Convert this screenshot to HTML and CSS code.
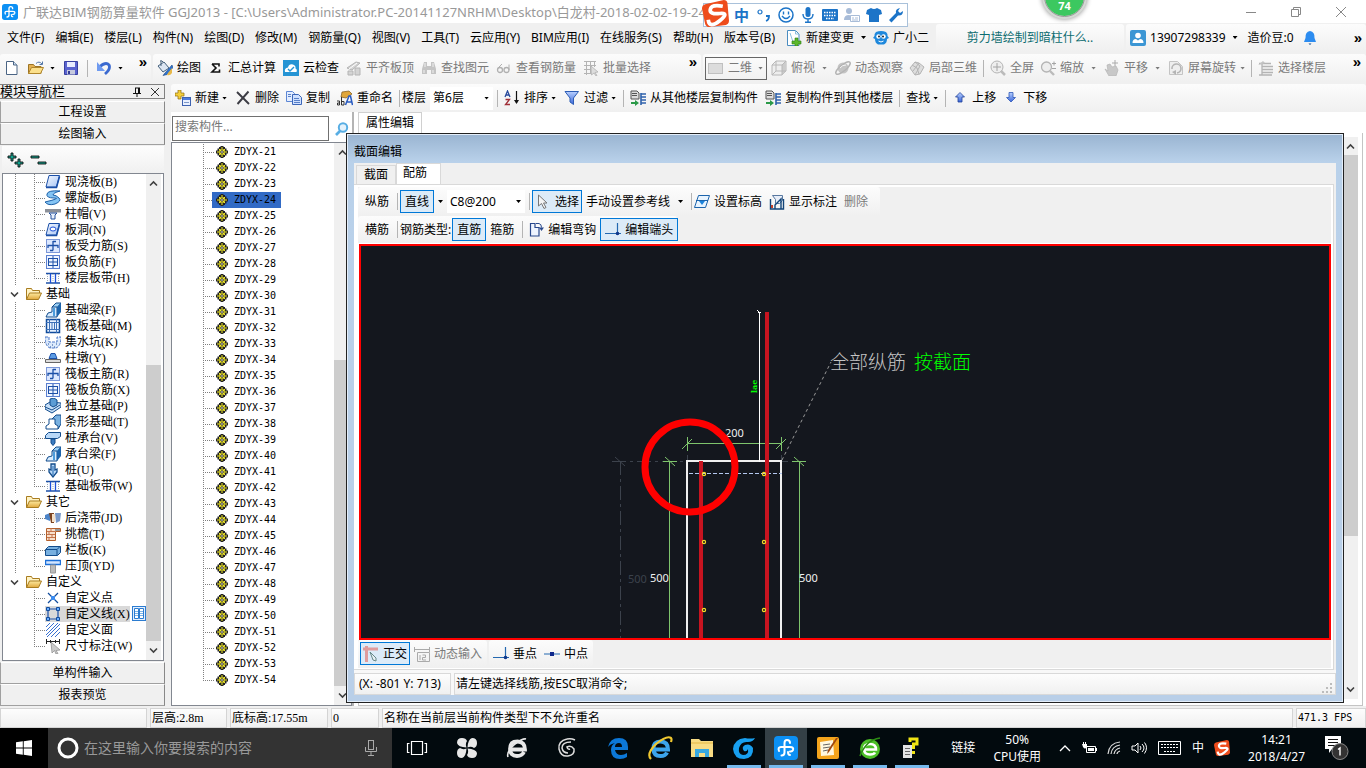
FILE: index.html
```html
<!DOCTYPE html>
<html lang="zh-CN">
<head>
<meta charset="utf-8">
<title>广联达BIM钢筋算量软件 GGJ2013</title>
<link rel="stylesheet" href="styles.css">
</head>
<body>
<svg class="sprite" aria-hidden="true">
  <defs>
    <linearGradient id="gBlue" x1="0" y1="0" x2="0" y2="1"><stop offset="0" stop-color="#b8d0ff"/><stop offset="1" stop-color="#3a66d8"/></linearGradient>
    <linearGradient id="gGold" x1="0" y1="0" x2="0" y2="1"><stop offset="0" stop-color="#fdeaa0"/><stop offset="1" stop-color="#e0a83c"/></linearGradient>
    <linearGradient id="gPlate" x1="0" y1="0" x2="1" y2="1"><stop offset="0" stop-color="#f4f8ff"/><stop offset="1" stop-color="#a9c6f5"/></linearGradient>
  </defs>
  <symbol id="app" viewBox="0 0 24 24"><rect width="24" height="24" rx="4" fill="#0c90f4"/><path d="M16 7q0-3-3-3-2.500 0-2.500 3v9.500q0 3-3 3M5 15q-1.500-4 2-4h9q4 0 3 3-1 2-3 1.500M14 16q0 3 2 3" fill="none" stroke="#fff" stroke-width="2" stroke-linecap="round"/></symbol>
  <symbol id="new" viewBox="0 0 16 16"><path d="M2.500 1.500h7l3.500 3.500v9.500H2.500z" fill="#fff" stroke="#4a6484"/><path d="M9.500 1.500v3.500H13" fill="#cfe0f4" stroke="#4a6484"/></symbol>
  <symbol id="open" viewBox="0 0 16 16"><path d="M.5 13.500v-9h5l1.500 2h6v7z" fill="#e3b052" stroke="#9c7424"/><path d="M.5 13.500l3-6h12l-3 6z" fill="#fbe08c" stroke="#b0862c"/><path d="M8 3.500q3-3 6 .5M14.500 1.500v3h-3" fill="none" stroke="#5478a8"/></symbol>
  <symbol id="save" viewBox="0 0 16 16"><path d="M1.500 1.500h13v13h-13z" fill="#5a63cf" stroke="#3840a0"/><path d="M4 2h8v5H4z" fill="#e8ecff"/><path d="M4 10h8v4.500H4z" fill="#c6cade"/><path d="M5 11h2v3H5z" fill="#343c94"/></symbol>
  <symbol id="undo" viewBox="0 0 16 16"><path d="M4 6.500q6-5 9-1.500 2 4-4 9" fill="none" stroke="#3b6ad0" stroke-width="2.800"/><path d="M1 2v9h8z" fill="#6f9bf0"/></symbol>
  <symbol id="paint" viewBox="0 0 16 16"><path d="M1 6l6-4 5 6-6 4z" fill="#dce6f2" stroke="#44607c"/><path d="M4 1v5M3 1q2-1 3 1" stroke="#44607c" fill="none"/><path d="M15 5l-7 8-2 2.500 4-1 6-7z" fill="#2f74d0" stroke="#1a4684" stroke-width=".6"/><path d="M11 13l4-5v5q-2 3-5 2z" fill="#e8b848"/></symbol>
  <symbol id="sigma" viewBox="0 0 16 16"><path d="M4 4h7v2.500M4 4l4 4-4 4h7.500V9.500" fill="none" stroke="#111" stroke-width="1.600"/></symbol>
  <symbol id="cloud" viewBox="0 0 16 16"><rect width="16" height="16" fill="#2594d4"/><path d="M2 12q-1-4 3-4.500 1-4 5-3 3 1 2.500 4 2 1 1 3.500z" fill="#fff"/><path d="M5 9l2 2 4-4" fill="none" stroke="#2594d4" stroke-width="1.400"/></symbol>
  <symbol id="align" viewBox="0 0 16 16"><path d="M1 8l9-6 4 1-8 7zM2 11h5v4H2zM9 8h5v7H9z" fill="#d4d4d4" stroke="#b4b4b4"/><path d="M3 9l8-6" stroke="#fff"/></symbol>
  <symbol id="find" viewBox="0 0 16 16"><path d="M3 2h3v4h4V2h3l2 7v5H10v-4H6v4H1V9z" fill="#c4c4c4"/><path d="M3 10v3M12 10v3M4 3v4M12 3v4" stroke="#f0f0f0"/></symbol>
  <symbol id="glasses" viewBox="0 0 16 16"><circle cx="4" cy="10" r="2.500" fill="none" stroke="#b0b0b0" stroke-width="1.300"/><circle cx="10.500" cy="10" r="2.500" fill="none" stroke="#b0b0b0" stroke-width="1.300"/><path d="M2 8l4-4M13 10V4.500" stroke="#b0b0b0" fill="none"/></symbol>
  <symbol id="batch" viewBox="0 0 16 16"><path d="M1 1.500h12M1 5.500h12M1 9.500h7M1 13.500h6M3.500 1v14M7.500 1v13M11.500 1v6" stroke="#b4b4b4" fill="none"/><path d="M8 6l7 6-3 .5 2 3-1 .5-2-3-2.500 2z" fill="#ddd" stroke="#aaa" stroke-width=".7"/></symbol>
  <symbol id="flat" viewBox="0 0 16 16"><rect x=".5" y="3.500" width="14" height="10" fill="#dcdcdc" stroke="#c0c0c0"/></symbol>
  <symbol id="cube" viewBox="0 0 16 16"><path d="M1 5l4-4h10v10l-4 4H1z" fill="#eee" stroke="#b8b8b8"/><path d="M11 5l4-4v10l-4 4z" fill="#ccc"/><path d="M1 5h10v10M11 5l4-4M5 1v10H15M5 11l-4 4" fill="none" stroke="#b8b8b8"/></symbol>
  <symbol id="orbit" viewBox="0 0 16 16"><circle cx="8" cy="8" r="5.500" fill="#c4c4c4"/><ellipse cx="8" cy="8" rx="9" ry="3" transform="rotate(-40 8 8)" fill="none" stroke="#b4b4b4" stroke-width="1.400"/><path d="M5 8q2-3 6-3" stroke="#f4f4f4" fill="none"/></symbol>
  <symbol id="local" viewBox="0 0 16 16"><path d="M1 8l5-6 4 1 5 4-4 7-5 1z" fill="#ddd" stroke="#b4b4b4"/><path d="M3 5l5 3 2 6M6 2l5 4-5 9M10 3L4 11" fill="none" stroke="#b4b4b4"/></symbol>
  <symbol id="full" viewBox="0 0 16 16"><circle cx="7" cy="7" r="6" fill="#eee" stroke="#b4b4b4"/><path d="M7 3v8M3 7h8" stroke="#a4a4a4"/><path d="M11 11l4 4" stroke="#bbb" stroke-width="2.500"/></symbol>
  <symbol id="zoom" viewBox="0 0 16 16"><circle cx="6.500" cy="7" r="5" fill="#eee" stroke="#b4b4b4" stroke-width="1.300"/><path d="M10 11l4 4" stroke="#bbb" stroke-width="2.400"/><path d="M12 3.500h4M14 1.500v4M12 8.500h4" stroke="#a4a4a4"/></symbol>
  <symbol id="hand" viewBox="0 0 16 16"><path d="M1 9l3 2-1-6 3-1 2 3 4-1 2 4-2 6H5z" fill="#c8c8c8" stroke="#b4b4b4" stroke-width=".7"/><path d="M11 0v6M8 3h6" stroke="#aaa"/></symbol>
  <symbol id="rotate" viewBox="0 0 16 16"><path d="M1.500 14.500v-13h8l5 5v8z" fill="#eee" stroke="#c4c4c4"/><path d="M4 9a4.500 4.500 0 1 1 5 4" fill="none" stroke="#b4b4b4" stroke-width="1.600"/><path d="M4 12l4-2v5z" fill="#b4b4b4"/></symbol>
  <symbol id="floors" viewBox="0 0 16 16"><path d="M1 3.500h12M4 6.500h11M4 9.500h11M4 12.500h11M1 15h13M4 3v12" stroke="#b4b4b4" fill="none" stroke-width="1.300"/><path d="M0 5l5-4 2 2z" fill="#c4c4c4"/></symbol>
  <symbol id="add" viewBox="0 0 16 16"><path d="M3 0h3v3h3v3H6v3H3V6H0V3h3z" fill="#f4cf3c" stroke="#8c6c10" stroke-width=".7"/><rect x="7.500" y="7.500" width="8" height="8" fill="#e9f0ff" stroke="#3e62b0"/><path d="M8 8h7v2H8z" fill="#4d7ce0"/><path d="M9 12.500h5" stroke="#7d98c8"/></symbol>
  <symbol id="del" viewBox="0 0 16 16"><path d="M2 2l12 12M13.500 1.500L2.500 14" stroke="#3c3c44" stroke-width="1.900"/></symbol>
  <symbol id="copy" viewBox="0 0 16 16"><path d="M.5 1.500h6l2 2v8h-8z" fill="#e3edff" stroke="#5c86d4"/><path d="M6.500 4.500h6l3 3v7h-9z" fill="#cfe0ff" stroke="#3c66b8"/><path d="M2 4.500h3M2 6.500h3M8 8.500h5M8 10.500h6M8 12.500h6" stroke="#5880c8"/></symbol>
  <symbol id="rename" viewBox="0 0 16 16"><path d="M5 2l7-1 3 3-6 4-5-1z" fill="#e0a63a" stroke="#7c5618" stroke-width=".7"/><path d="M8.500 15L12 6h1.500l2 9M10 12h4.500" stroke="#285ac0" stroke-width="1.500" fill="none"/><path d="M0 11h2.500v4H.5v-2h2M4.500 7v8h2.500v-3.500H5" stroke="#333" fill="none"/></symbol>
  <symbol id="sort" viewBox="0 0 16 16"><path d="M1 7l2.500-6L6 7M2 5h3" stroke="#284a9c" stroke-width="1.300" fill="none"/><path d="M1.500 9.500h4l-4 5h4.500" stroke="#a03038" stroke-width="1.300" fill="none"/><path d="M12.500 1v12" stroke="#111" stroke-width="1.200"/><path d="M10 10h5l-2.500 4z" fill="#111"/></symbol>
  <symbol id="filter" viewBox="0 0 16 16"><path d="M1 1.500h13.500L9.500 8v6.500L6 12V8z" fill="url(#gBlue)" stroke="#2c5cb4"/></symbol>
  <symbol id="fromf" viewBox="0 0 16 16"><path d="M1 1h6l2 2v6H1z" fill="#ddd" stroke="#555"/><path d="M2 3.500h5M2 5.500h5" stroke="#555"/><path d="M1 12h4v-2l4 3-4 3v-2H1z" fill="#2b9a48"/><path d="M11 3v12M11 4h5M11 7h5M11 10h5M11 13h5" stroke="#2f62ac" stroke-width="1.600"/></symbol>
  <symbol id="up" viewBox="0 0 16 16"><path d="M8 2.500l4.500 4.500H10v5H6V7H3.500z" fill="url(#gBlue)" stroke="#1e4098" stroke-width=".8"/></symbol>
  <symbol id="down" viewBox="0 0 16 16"><path d="M8 12l4.500-4.500H10v-5H6v5H3.500z" fill="url(#gBlue)" stroke="#2e58b8" stroke-width=".8"/></symbol>
  <symbol id="change" viewBox="0 0 16 16"><path d="M1.500.5h8l3.500 3.500v11.500H1.500z" fill="#fff" stroke="#4a8cc0"/><path d="M9.500.5V4H13M4 3l3 9" stroke="#8cc0e0" fill="none"/><path d="M9 8h3v3h3v3h-3v2H9v-2H6v-3h3z" fill="#5cb82c" stroke="#2c7c14" stroke-width=".6"/></symbol>
  <symbol id="owl" viewBox="0 0 16 16"><path d="M3 2q5-2 10 0 2 2 1.500 4l1.500 2-2 1q0 4-3 5.500H5Q2 13 2 9L0 8l1.500-2Q1 4 3 2z" fill="#1e88dc"/><circle cx="5.500" cy="6.500" r="2.200" fill="#fff"/><circle cx="10.500" cy="6.500" r="2.200" fill="#fff"/><circle cx="6" cy="6.500" r="1" fill="#123"/><circle cx="10" cy="6.500" r="1" fill="#123"/><path d="M5.500 11q2.500 2 5 0" stroke="#fff" fill="none"/></symbol>
  <symbol id="user" viewBox="0 0 16 16"><rect width="16" height="16" rx="2" fill="#3c96d4"/><circle cx="8" cy="5.500" r="2.800" fill="#fff"/><path d="M2.500 13q0-4 3.500-4l2 1.500L10 9q3.500 0 3.500 4z" fill="#fff"/></symbol>
  <symbol id="bell" viewBox="0 0 16 16"><path d="M8 1q5 1 4.500 7l1.500 4H2l1.500-4Q3 2 8 1z" fill="#2c8cf0"/><path d="M6.500 13.500h3L8 15z" fill="#124c90"/></symbol>
  <symbol id="folder" viewBox="0 0 16 16"><path d="M.5 13.500v-11h5l1 2h7v3" fill="#fff3c4" stroke="#a87c20"/><path d="M.5 13.500l3-6.500h12l-3 6.500z" fill="url(#gGold)" stroke="#a87c20"/></symbol>
  <symbol id="chev" viewBox="0 0 9 9"><path d="M1 2.500l3.500 3.500L8 2.500" fill="none" stroke="#404040" stroke-width="1.600"/></symbol>
  <symbol id="slab" viewBox="0 0 16 16"><path d="M4 1.500h10.500l-3 11.500H1z" fill="url(#gPlate)" stroke="#1c50a8"/><path d="M1 13.500h10.500l3-11" stroke="#1c50a8" stroke-width="1.600" fill="none"/></symbol>
  <symbol id="spiral" viewBox="0 0 16 16"><path d="M15 1Q3 0 2 4t7 4-9 4q3 4 10 2 7-3 4-6T8 5q0-2 7-4z" fill="#84c4f4" stroke="#1c60a8"/></symbol>
  <symbol id="cap" viewBox="0 0 16 16"><path d="M0 3h16v3.500H0z" fill="#8c9098"/><path d="M4 7h8l-2 2v4H6V9z" fill="#e8f0fc" stroke="#24509c"/></symbol>
  <symbol id="hole" viewBox="0 0 16 16"><path d="M4 1.500h10.500l-3 11.500H1z" fill="url(#gPlate)" stroke="#1c50a8"/><path d="M1 13.500h10.500l3-11" stroke="#1c50a8" stroke-width="1.600" fill="none"/><ellipse cx="8" cy="7" rx="3" ry="2" fill="#fff" stroke="#1c50d8"/></symbol>
  <symbol id="bar1" viewBox="0 0 16 16"><rect x="1.500" y="1.500" width="13" height="13" fill="#dce8ff" stroke="#7c98d8"/><path d="M3 10V7.500h10V10M8 12.500h-3M8 3v9.500M8 3.500h3" fill="none" stroke="#1c50a8" stroke-width="1.300"/></symbol>
  <symbol id="bar2" viewBox="0 0 16 16"><rect x="1.500" y="1.500" width="13" height="13" fill="#eef4ff" stroke="#5c80d0"/><path d="M3 8h10M8 2v12M4 4.500h8M4 11.500h8M3.500 4v8M12.500 4v8" fill="none" stroke="#1c50a8"/></symbol>
  <symbol id="strip" viewBox="0 0 16 16"><path d="M1 3.500h14M1 13h14" stroke="#1c50a8" stroke-width="1.400"/><path d="M5.500 4v9M10.500 4v9" stroke="#1c50d8" stroke-width="1.300"/><path d="M2.500 4v8M13.500 4v8M8 4v8" stroke="#9ab" stroke-dasharray="1 1"/></symbol>
  <symbol id="beam" viewBox="0 0 16 16"><path d="M7 5l4-4h5l-4 5z" fill="#9cd0f4" stroke="#124c8c"/><path d="M7 5h5v10H1l2-4 4-1z" fill="#d8ecff" stroke="#124c8c"/><path d="M12 5l4-4v9l-4 5z" fill="#1c64ac"/><path d="M8 6h2v8H8z" fill="#4c9cdc"/></symbol>
  <symbol id="raft" viewBox="0 0 16 16"><rect x="1.500" y="1.500" width="13" height="13" fill="#e8f2ff" stroke="#124c9c" stroke-width="1.500"/><path d="M1 4.500h14M1 11.500h14M4.500 1v14M11.500 1v14M7 4v8M9.500 4v8" stroke="#3c70b8"/></symbol>
  <symbol id="pit" viewBox="0 0 16 16"><path d="M0 3h4v5h8V3h4q0 9-5 11H5Q0 12 0 3z" fill="#dceafc" stroke="#4c78c8" stroke-dasharray="3 1"/><path d="M3 10h1M7 11h1M11 10h1M5 13h1M9 13h1" stroke="#24509c"/></symbol>
  <symbol id="pier" viewBox="0 0 16 16"><path d="M6 3.500h4l2 5H4z" fill="#5c9ce4" stroke="#1c50a8"/><path d="M.5 9.500h15v3H.5z" fill="#ddd" stroke="#666"/></symbol>
  <symbol id="indep" viewBox="0 0 16 16"><path d="M0 7l5-3 11 1v4l-9 6-7-4z" fill="#c8e0f8" stroke="#124c8c"/><path d="M5 1l4-1 3 2v5L8 9 5 7z" fill="#5c9cd4" stroke="#124c8c"/><path d="M0 9l7 3 8-5" fill="none" stroke="#124c8c"/></symbol>
  <symbol id="footing" viewBox="0 0 16 16"><path d="M7 5l4-4h5v9l-3 5z" fill="#78b0e0" stroke="#124c8c"/><path d="M4 5h6v5l3 2v3H1v-3l3-2z" fill="#fff" stroke="#124c8c"/></symbol>
  <symbol id="pilecap" viewBox="0 0 16 16"><path d="M.5 5.500l3-3h12v4l-3 2H.5z" fill="#b8d8f8" stroke="#124c8c"/><path d="M6 9h4v4l-2 2.500L6 13z" fill="#3c7cc0" stroke="#124c8c"/></symbol>
  <symbol id="pile" viewBox="0 0 16 16"><path d="M6 2h4v6l2-1v3l-4 5-4-5V7l2 1z" fill="#b8d8f8" stroke="#124c8c" stroke-width="1.300"/><path d="M8 4v9" stroke="#1c64ac"/></symbol>
  <symbol id="post" viewBox="0 0 16 16"><path d="M0 5l5-2v8l-5-2z" fill="#4c84c8"/><path d="M4 3h5v10H6z" fill="#7c4420"/><path d="M7 4h3v8H7z" fill="#f4e0c8"/><path d="M10 3h6l-1 8-4 2z" fill="#7898c8"/></symbol>
  <symbol id="eave" viewBox="0 0 16 16"><path d="M1.500 2.500h14v3h-5v9h-9z" fill="#f8e0cc" stroke="#b4602c"/><path d="M2 5.500h8M2 8.500h8M2 11.500h8M6 2v3M4 5v3M7 8v3M4 11v3" stroke="#c4744c"/><path d="M10 3h5v2h-5z" fill="#999"/></symbol>
  <symbol id="rail" viewBox="0 0 16 16"><path d="M.5 7.500l3-3h12v6l-3 3H.5z" fill="#78b0e0" stroke="#124c8c"/><path d="M1 7.500h11v6M12 7.500l3-3" fill="none" stroke="#124c8c"/></symbol>
  <symbol id="coping" viewBox="0 0 16 16"><path d="M.5 2.500h15v4H.5z" fill="#d4e6ff" stroke="#1c70d8" stroke-width="1.400"/><path d="M5.500 7h5v8h-5z" fill="#bbb" stroke="#999"/></symbol>
  <symbol id="pt" viewBox="0 0 16 16"><path d="M3 3l4 4M13 3L9 7M3 13l4-4M13 13L9 9" stroke="#124c9c" stroke-width="1.200"/><rect x="6" y="6" width="4" height="4" fill="#3c8cf0"/></symbol>
  <symbol id="ln" viewBox="0 0 16 16"><path d="M3 3h10v10H3z" fill="none" stroke="#1c50a8" stroke-width="1.200"/><path d="M1.500 1.500h3v3h-3zM11.500 1.500h3v3h-3zM1.500 11.500h3v3h-3zM11.500 11.500h3v3h-3z" fill="#6cb0ff" stroke="#124c9c"/></symbol>
  <symbol id="hatch" viewBox="0 0 16 16"><path d="M1 5l4-4M1 9l8-8M1 13L13 1M2 15L15 2M6 15l9-9M10 15l5-5" stroke="#3870d0"/></symbol>
  <symbol id="dim" viewBox="0 0 16 16"><path d="M1 3.500h14M1.500 1v5M5.500 2v3M10.500 2v3M14.500 1v5" stroke="#222"/><path d="M6 4l9 8-4 .5 2 3-2 .5-1.500-3.500L7 15z" fill="#ccc" stroke="#888" stroke-width=".7"/></symbol>
  <symbol id="book" viewBox="0 0 14 16"><rect x=".5" y=".5" width="13" height="14" fill="#e4f0ff" stroke="#2c7cd0"/><path d="M2.500 2.500h4v10h-4zM7.500 2.500h4v10h-4z" fill="#fff" stroke="#2c7cd0"/><path d="M3 5.500h3M3 7.500h3M3 9.500h3M8 5.500h3M8 7.500h3M8 9.500h3" stroke="#7cb4e8"/></symbol>
  <symbol id="gear" viewBox="0 0 12 12"><path d="M3 1h1.500V0h3v1H9v1.500h1.500V4.500H12v3h-1.500v2H9V11H7.500v1h-3v-1H3V9.500H1.500v-2H0v-3h1.500v-2H3z" fill="#222"/><path d="M5.500 1h1v2h-1zM5.500 9h1v2h-1zM1 5.500h2v1H1zM9 5.500h2v1H9zM3 3h1.500v1.500H3zM7.500 3H9v1.500H7.500zM3 7.500h1.500V9H3zM7.500 7.500H9V9H7.500z" fill="#f4ec28"/><circle cx="6" cy="6" r="2.800" fill="#f4ec28"/><circle cx="6" cy="6" r="1.300" fill="#fff" stroke="#222" stroke-width=".9"/></symbol>
  <symbol id="mag" viewBox="0 0 16 16"><circle cx="9" cy="6.500" r="4.200" fill="#e4f2fc" stroke="#58aee4" stroke-width="2"/><path d="M6 10l-4 4" stroke="#58aee4" stroke-width="2.600"/></symbol>
  <symbol id="cursor" viewBox="0 0 16 16"><path d="M3.500 1v11l3-2.500 2.500 5 2-1-2.500-4.500H12z" fill="#f4f4f4" stroke="#777"/></symbol>
  <symbol id="level" viewBox="0 0 16 16"><path d="M4.500 1.500h11l-4 12H.5z" fill="#e8f4ff" stroke="#1c64ac"/><path d="M2 6.500h12" stroke="#1c64ac"/><path d="M5 7h6l-3 4z" fill="#1c84dc"/></symbol>
  <symbol id="note" viewBox="0 0 16 16"><path d="M3.500 1.500h10v5l-3 3h-4v-4z" fill="#e8eef8" stroke="#5878a0"/><path d="M1.500 5v10h13V5M6 15v-4l6-6v10" fill="none" stroke="#124478" stroke-width="1.400"/><path d="M2 11h2v3H2z" fill="#c04028"/></symbol>
  <symbol id="hook" viewBox="0 0 16 16"><path d="M2.500 1.500h4.500v4h4v8.500H2.500z" fill="#eef4ff" stroke="#28488c" stroke-width="1.200"/><path d="M8 1.500h3q2.500.5 2.500 4" fill="none" stroke="#28488c"/><path d="M11 5.500h5L13.500 9z" fill="#28488c"/></symbol>
  <symbol id="perp" viewBox="0 0 16 16"><path d="M0 11.500h16M12.500 1v12" stroke="#2468b0" stroke-width="1.200"/><circle cx="12.500" cy="11.500" r="1.800" fill="#10388c"/></symbol>
  <symbol id="mid" viewBox="0 0 16 16"><path d="M0 8h16" stroke="#2468b0"/><rect x="6" y="6" width="4" height="4" fill="#10288c"/></symbol>
  <symbol id="ortho" viewBox="0 0 16 16"><path d="M0 3h15M3.500 0v16" stroke="#e09c9c" stroke-width="3"/><path d="M7 6l6 6v3l-3-1z" fill="#e8f0f4" stroke="#688"/></symbol>
  <symbol id="dyn" viewBox="0 0 16 16"><path d="M.5 1v5M.5 3.500h15M15.500 1v5" stroke="#aaa"/><path d="M3.500 6.500h12v9h-12zM6 9v5M8.500 9h3v2.500h-3v2.500h3.500" fill="none" stroke="#aaa"/></symbol>
  <symbol id="sogou" viewBox="0 0 26 26"><path d="M3 4L21 0q3 0 3.500 3L26 20q0 3-3 4L7 26q-3 0-4-3L0 8q0-3 3-4z" fill="#ee4c1c"/><path d="M20 6Q9 4 8 9t9 4 0 7-11-1" fill="none" stroke="#fff" stroke-width="3.600"/></symbol>
</svg>

<div class="app">
  <header class="title">
    <svg class="i"><use href="#app"/></svg>
    <h1>广联达BIM钢筋算量软件 GGJ2013 - [C:\Users\Administrator.PC-20141127NRHM\Desktop\白龙村-2018-02-02-19-24-35</h1>
    <div class="winbtns">
      <button aria-label="最小化"><svg width="12" height="12"><path d="M1 6.500h10" stroke="#888"/></svg></button>
      <button aria-label="还原"><svg width="12" height="12"><path d="M3.500 3V1.500h7v7H9M1.500 3.500h7v7h-7z" fill="none" stroke="#888"/></svg></button>
      <button aria-label="关闭"><svg width="12" height="12"><path d="M1 1l10 10M11 1L1 11" stroke="#888"/></svg></button>
    </div>
    <div class="ime">
      <svg class="ime-logo"><use href="#sogou"/></svg>
      <b>中</b>
      <svg viewBox="0 0 16 16"><circle cx="4" cy="5" r="2" fill="none" stroke="#1c74c8" stroke-width="1.200"/><path d="M10 9h3q0 4-3 5" fill="none" stroke="#1c74c8" stroke-width="1.800"/></svg>
      <svg viewBox="0 0 16 16"><circle cx="8" cy="8" r="7" fill="none" stroke="#1c74c8" stroke-width="1.500"/><path d="M5.500 4.500v3M10.500 4.500v3M4 9q4 5 8 0" fill="none" stroke="#1c74c8" stroke-width="1.400"/></svg>
      <svg viewBox="0 0 16 16"><rect x="5.500" y="0" width="5" height="10" rx="2.500" fill="#1c74c8"/><path d="M3 7q0 5 5 5t5-5M8 12v3M5 15.200h6" fill="none" stroke="#1c74c8" stroke-width="1.400"/></svg>
      <svg viewBox="0 0 16 16"><rect x="0" y="2" width="16" height="12" rx="1" fill="#1c74c8"/><path d="M2 5.500h12M2 8.500h12M4 11.500h8" stroke="#fff" stroke-width="1.500" stroke-dasharray="1.500 1"/></svg>
      <svg viewBox="0 0 16 16"><circle cx="5" cy="4" r="3" fill="#a8bcd8"/><path d="M0 13q0-5 5-5l3 1v4z" fill="#a8bcd8"/><path d="M6.500 8.500h9v6h-9z" fill="#fff" stroke="#a8bcd8"/><path d="M8 11h2M11 11h3M8 13h6" stroke="#a8bcd8"/></svg>
      <svg viewBox="0 0 16 16"><path d="M5 1q3 2 6 0l4 2 1 4-3 1v7H3V8L0 7l1-4z" fill="#1c74c8"/></svg>
      <svg viewBox="0 0 16 16"><path d="M1 13l7-7q-1-4 4-5L10 4l2 2 3-2q0 5-5 4.500L3.500 15.500z" fill="#1c74c8"/></svg>
    </div>
    <div class="ball">74</div>
  </header>

  <nav class="menu">
    <div class="menu-items">
      <button>文件(F)</button><button>编辑(E)</button><button>楼层(L)</button><button>构件(N)</button><button>绘图(D)</button><button>修改(M)</button><button>钢筋量(Q)</button><button>视图(V)</button><button>工具(T)</button><button>云应用(Y)</button><button>BIM应用(I)</button><button>在线服务(S)</button><button>帮助(H)</button><button>版本号(B)</button>
    </div>
    <button class="t"><svg class="i"><use href="#change"/></svg>新建变更<i class="arr wide"></i></button>
    <button class="t owl"><svg class="i"><use href="#owl"/></svg>广小二</button>
    <div class="strip news"><a href="#">剪力墙绘制到暗柱什么..</a></div>
    <div class="strip account">
      <button class="t"><svg class="i"><use href="#user"/></svg>13907298339<i class="arr wide"></i></button>
      <span>造价豆:0</span>
      <button aria-label="通知"><svg class="i"><use href="#bell"/></svg></button>
      <b class="more">»</b>
    </div>
  </nav>

  <div class="bars">
    <div class="strip file">
      <button aria-label="新建"><svg class="i"><use href="#new"/></svg></button>
      <button class="t" aria-label="打开"><svg class="i"><use href="#open"/></svg><i class="arr"></i></button>
      <button aria-label="保存"><svg class="i"><use href="#save"/></svg></button>
      <i class="sep"></i>
      <button class="t" aria-label="撤销"><svg class="i"><use href="#undo"/></svg><i class="arr"></i></button>
      <b class="more">»</b>
    </div>
    <div class="strip draw">
      <button class="t"><svg class="i"><use href="#paint"/></svg>绘图</button>
      <button class="t"><svg class="i"><use href="#sigma"/></svg>汇总计算</button>
      <button class="t"><svg class="i"><use href="#cloud"/></svg>云检查</button>
      <button class="t off"><svg class="i"><use href="#align"/></svg>平齐板顶</button>
      <button class="t off"><svg class="i"><use href="#find"/></svg>查找图元</button>
      <button class="t off"><svg class="i"><use href="#glasses"/></svg>查看钢筋量</button>
      <button class="t off"><svg class="i"><use href="#batch"/></svg>批量选择</button>
      <b class="more">»</b>
    </div>
    <div class="strip view">
      <label class="mode"><svg class="i"><use href="#flat"/></svg><select aria-label="视图模式"><option>二维</option></select><i class="arr"></i></label>
      <button class="t off"><svg class="i"><use href="#cube"/></svg>俯视<i class="arr wide"></i></button>
      <button class="t off"><svg class="i"><use href="#orbit"/></svg>动态观察</button>
      <button class="t off"><svg class="i"><use href="#local"/></svg>局部三维</button>
      <i class="sep"></i>
      <button class="t off"><svg class="i"><use href="#full"/></svg>全屏</button>
      <button class="t off"><svg class="i"><use href="#zoom"/></svg>缩放<i class="arr wide"></i></button>
      <button class="t off"><svg class="i"><use href="#hand"/></svg>平移<i class="arr wide"></i></button>
      <button class="t off"><svg class="i"><use href="#rotate"/></svg>屏幕旋转<i class="arr"></i></button>
      <i class="sep"></i>
      <button class="t off"><svg class="i"><use href="#floors"/></svg>选择楼层</button>
      <b class="more">»</b>
    </div>
  </div>

  <div class="main">
    <aside class="nav">
      <div class="nav-head"><span>模块导航栏</span>
        <svg width="10" height="10"><path d="M3 1h5M3.500 1v5M6.500 1v5M7.500 1v5M1 6.500h8M5 6v4" stroke="#111" fill="none"/></svg>
        <svg width="10" height="10"><path d="M1 1l8 8M9 1L1 9" stroke="#333"/></svg>
      </div>
      <button class="cat">工程设置</button>
      <button class="cat">绘图输入</button>
      <div class="expand">
        <svg width="40" height="16"><path d="M1 4h3V1h2v3h3v2H6v3H4V6H1zM8 10h3V7h2v3h3v2h-3v3h-2v-3H8zM24 4h8v2h-8zM31 10h8v2h-8z" fill="#14a08c" stroke="#111" stroke-width=".9"/></svg>
      </div>
      <div class="tree">
        <ul class="nodes">
          <li class="leaf"><svg class="i"><use href="#slab"/></svg>现浇板(B)</li>
          <li class="leaf"><svg class="i"><use href="#spiral"/></svg>螺旋板(B)</li>
          <li class="leaf"><svg class="i"><use href="#cap"/></svg>柱帽(V)</li>
          <li class="leaf"><svg class="i"><use href="#hole"/></svg>板洞(N)</li>
          <li class="leaf"><svg class="i"><use href="#bar1"/></svg>板受力筋(S)</li>
          <li class="leaf"><svg class="i"><use href="#bar2"/></svg>板负筋(F)</li>
          <li class="leaf end"><svg class="i"><use href="#strip"/></svg>楼层板带(H)</li>
          <li class="group"><svg class="c"><use href="#chev"/></svg><svg class="i"><use href="#folder"/></svg>基础</li>
          <li class="leaf"><svg class="i"><use href="#beam"/></svg>基础梁(F)</li>
          <li class="leaf"><svg class="i"><use href="#raft"/></svg>筏板基础(M)</li>
          <li class="leaf"><svg class="i"><use href="#pit"/></svg>集水坑(K)</li>
          <li class="leaf"><svg class="i"><use href="#pier"/></svg>柱墩(Y)</li>
          <li class="leaf"><svg class="i"><use href="#bar1"/></svg>筏板主筋(R)</li>
          <li class="leaf"><svg class="i"><use href="#bar2"/></svg>筏板负筋(X)</li>
          <li class="leaf"><svg class="i"><use href="#indep"/></svg>独立基础(P)</li>
          <li class="leaf"><svg class="i"><use href="#footing"/></svg>条形基础(T)</li>
          <li class="leaf"><svg class="i"><use href="#pilecap"/></svg>桩承台(V)</li>
          <li class="leaf"><svg class="i"><use href="#beam"/></svg>承台梁(F)</li>
          <li class="leaf"><svg class="i"><use href="#pile"/></svg>桩(U)</li>
          <li class="leaf end"><svg class="i"><use href="#strip"/></svg>基础板带(W)</li>
          <li class="group"><svg class="c"><use href="#chev"/></svg><svg class="i"><use href="#folder"/></svg>其它</li>
          <li class="leaf"><svg class="i"><use href="#post"/></svg>后浇带(JD)</li>
          <li class="leaf"><svg class="i"><use href="#eave"/></svg>挑檐(T)</li>
          <li class="leaf"><svg class="i"><use href="#rail"/></svg>栏板(K)</li>
          <li class="leaf end"><svg class="i"><use href="#coping"/></svg>压顶(YD)</li>
          <li class="group"><svg class="c"><use href="#chev"/></svg><svg class="i"><use href="#folder"/></svg>自定义</li>
          <li class="leaf tail"><svg class="i"><use href="#pt"/></svg>自定义点</li>
          <li class="leaf tail"><span class="cur"><svg class="i"><use href="#ln"/></svg>自定义线(X)</span><svg class="bk"><use href="#book"/></svg></li>
          <li class="leaf tail"><svg class="i"><use href="#hatch"/></svg>自定义面</li>
          <li class="leaf tail end"><svg class="i"><use href="#dim"/></svg>尺寸标注(W)</li>
        </ul>
        <div class="scroll"><svg class="c flip"><use href="#chev"/></svg><i class="thumb nav-thumb"></i><svg class="c"><use href="#chev"/></svg></div>
      </div>
      <button class="cat">单构件输入</button>
      <button class="cat">报表预览</button>
    </aside>

    <section class="work">
      <div class="strip parts">
        <button class="t"><svg class="i"><use href="#add"/></svg>新建<i class="arr"></i></button>
        <button class="t"><svg class="i"><use href="#del"/></svg>删除</button>
        <button class="t"><svg class="i"><use href="#copy"/></svg>复制</button>
        <button class="t"><svg class="i"><use href="#rename"/></svg>重命名</button>
        <i class="sep"></i>
        <label class="combo floor">楼层<span><select><option>第6层</option></select><i class="arr"></i></span></label>
        <i class="sep"></i>
        <button class="t"><svg class="i"><use href="#sort"/></svg>排序<i class="arr"></i></button>
        <button class="t"><svg class="i"><use href="#filter"/></svg>过滤<i class="arr"></i></button>
        <i class="sep"></i>
        <button class="t"><svg class="i"><use href="#fromf"/></svg>从其他楼层复制构件</button>
        <button class="t"><svg class="i"><use href="#fromf"/></svg>复制构件到其他楼层</button>
        <i class="sep"></i>
        <button class="t">查找<i class="arr"></i></button>
        <i class="sep"></i>
        <button class="t"><svg class="i"><use href="#up"/></svg>上移</button>
        <button class="t"><svg class="i"><use href="#down"/></svg>下移</button>
      </div>
      <div class="panes">
        <div class="list-pane">
          <div class="search"><input type="text" placeholder="搜索构件..." aria-label="搜索构件"><button aria-label="搜索"><svg class="i"><use href="#mag"/></svg></button></div>
          <div class="list">
            <ul>
              <li><span><svg><use href="#gear"/></svg>ZDYX-21</span></li>
              <li><span><svg><use href="#gear"/></svg>ZDYX-22</span></li>
              <li><span><svg><use href="#gear"/></svg>ZDYX-23</span></li>
              <li><span class="sel"><svg><use href="#gear"/></svg>ZDYX-24</span></li>
              <li><span><svg><use href="#gear"/></svg>ZDYX-25</span></li>
              <li><span><svg><use href="#gear"/></svg>ZDYX-26</span></li>
              <li><span><svg><use href="#gear"/></svg>ZDYX-27</span></li>
              <li><span><svg><use href="#gear"/></svg>ZDYX-28</span></li>
              <li><span><svg><use href="#gear"/></svg>ZDYX-29</span></li>
              <li><span><svg><use href="#gear"/></svg>ZDYX-30</span></li>
              <li><span><svg><use href="#gear"/></svg>ZDYX-31</span></li>
              <li><span><svg><use href="#gear"/></svg>ZDYX-32</span></li>
              <li><span><svg><use href="#gear"/></svg>ZDYX-33</span></li>
              <li><span><svg><use href="#gear"/></svg>ZDYX-34</span></li>
              <li><span><svg><use href="#gear"/></svg>ZDYX-35</span></li>
              <li><span><svg><use href="#gear"/></svg>ZDYX-36</span></li>
              <li><span><svg><use href="#gear"/></svg>ZDYX-37</span></li>
              <li><span><svg><use href="#gear"/></svg>ZDYX-38</span></li>
              <li><span><svg><use href="#gear"/></svg>ZDYX-39</span></li>
              <li><span><svg><use href="#gear"/></svg>ZDYX-40</span></li>
              <li><span><svg><use href="#gear"/></svg>ZDYX-41</span></li>
              <li><span><svg><use href="#gear"/></svg>ZDYX-42</span></li>
              <li><span><svg><use href="#gear"/></svg>ZDYX-43</span></li>
              <li><span><svg><use href="#gear"/></svg>ZDYX-44</span></li>
              <li><span><svg><use href="#gear"/></svg>ZDYX-45</span></li>
              <li><span><svg><use href="#gear"/></svg>ZDYX-46</span></li>
              <li><span><svg><use href="#gear"/></svg>ZDYX-47</span></li>
              <li><span><svg><use href="#gear"/></svg>ZDYX-48</span></li>
              <li><span><svg><use href="#gear"/></svg>ZDYX-49</span></li>
              <li><span><svg><use href="#gear"/></svg>ZDYX-50</span></li>
              <li><span><svg><use href="#gear"/></svg>ZDYX-51</span></li>
              <li><span><svg><use href="#gear"/></svg>ZDYX-52</span></li>
              <li><span><svg><use href="#gear"/></svg>ZDYX-53</span></li>
              <li><span><svg><use href="#gear"/></svg>ZDYX-54</span></li>
            </ul>
            <div class="scroll"><svg class="c flip"><use href="#chev"/></svg><i class="thumb list-thumb"></i><svg class="c"><use href="#chev"/></svg></div>
          </div>
        </div>
        <div class="prop-pane">
          <button class="prop-tab">属性编辑</button>
          <div class="prop-body">
            <div class="scroll"><svg class="c flip"><use href="#chev"/></svg><i class="thumb prop-thumb"></i><svg class="c"><use href="#chev"/></svg></div>
          </div>
        </div>
      </div>

      <div class="dialog" role="dialog" aria-labelledby="dlg">
        <h2 id="dlg">截面编辑</h2>
        <div class="dlg-body">
          <div class="tabs"><button>截面</button><button class="on">配筋</button></div>
          <div class="page">
            <div class="tools">
              <div class="strip row">
                <button class="cell">纵筋</button><i class="sep"></i>
                <button class="box">直线</button><i class="arr"></i>
                <label class="combo bar"><span><select aria-label="钢筋信息"><option>C8@200</option></select><i class="arr"></i></span></label>
                <i class="sep"></i>
                <button class="box t pick"><svg class="i"><use href="#cursor"/></svg>选择</button>
                <button class="t">手动设置参考线<i class="arr wide"></i></button>
                <i class="sep"></i>
                <button class="t"><svg class="i"><use href="#level"/></svg>设置标高</button>
                <button class="t sp"><svg class="i"><use href="#note"/></svg>显示标注</button>
                <button class="off sp">删除</button>
              </div>
              <div class="strip row second">
                <button class="cell">横筋</button><i class="sep"></i>
                <span class="kind">钢筋类型:</span>
                <button class="box">直筋</button>
                <button class="cell">箍筋</button>
                <i class="sep"></i>
                <button class="t sp"><svg class="i"><use href="#hook"/></svg>编辑弯钩</button>
                <button class="box t"><svg class="i"><use href="#perp"/></svg>编辑端头</button>
              </div>
            </div>
            <div class="canvas">
              <svg width="100%" height="100%">
                <g transform="translate(-361 -246)" fill="none">
                  <path d="M612 461.500h76M620.500 461v180M687.500 455v6M781.500 455v6M782 461.500h6" stroke="#3c424c" stroke-dasharray="14 4 3 4"/>
                  <path d="M615 457l10 9" stroke="#3c424c"/>
                  <path d="M687.500 443.500h94M687.500 437v14M781.500 437v14M682 449l10-10M776 449l10-10M669.500 461v180M663 461.500h14M665 457l10 9M799.500 461v180M792 461.500h14M794 457l10 9" stroke="#7ec46c"/>
                  <path d="M687 641V461h94v180" stroke="#f0f0f0" stroke-width="2"/>
                  <path d="M689 473.500h93" stroke="#b4c8f0" stroke-dasharray="4 2"/>
                  <path d="M701 461v180M767 312v329" stroke="#c81420" stroke-width="4"/>
                  <path d="M759.500 312v150M757 310l3 3M758 312.500h3" stroke="#fff"/>
                  <path d="M782 460l49-98" stroke="#9a9a9a" stroke-dasharray="3 3"/>
                  <g stroke="#f4dc28" stroke-width="1.200"><circle cx="704" cy="474" r="1.600"/><circle cx="764" cy="474" r="1.600"/><circle cx="704" cy="542" r="1.600"/><circle cx="764" cy="542" r="1.600"/><circle cx="704" cy="610" r="1.600"/><circle cx="764" cy="610" r="1.600"/></g>
                  <text x="725" y="437" class="num">200</text>
                  <text x="628" y="583" class="num dimmed">500</text>
                  <text x="650" y="582" class="num">500</text>
                  <text x="799" y="582" class="num">500</text>
                  <text class="lae" transform="translate(757 393) rotate(-90)">lae</text>
                  <text x="830" y="369" class="tag">全部纵筋</text>
                  <text x="914" y="369" class="tag green">按截面</text>
                  <circle cx="690" cy="467" r="45" stroke="#f00" stroke-width="7"/>
                </g>
              </svg>
            </div>
            <div class="snap">
              <div class="strip"><button class="box t slim"><svg class="i"><use href="#ortho"/></svg>正交</button><button class="t off"><svg class="i"><use href="#dyn"/></svg>动态输入</button></div>
              <div class="strip two"><button class="t"><svg class="i"><use href="#perp"/></svg>垂点</button><button class="t"><svg class="i"><use href="#mid"/></svg>中点</button></div>
            </div>
          </div>
          <div class="dlg-status"><span class="xy">(X: -801 Y: 713)</span><span class="tip">请左键选择线筋,按ESC取消命令;<svg width="12" height="12"><path d="M8 1h2v2H8zM8 5h2v2H8zM4 5h2v2H4zM8 9h2v2H8zM4 9h2v2H4zM0 9h2v2H0z" fill="#bcbcbc"/></svg></span></div>
        </div>
      </div>
    </section>
  </div>

  <footer class="status"><span class="s1"></span><span class="s2">层高:2.8m</span><span class="s3">底标高:17.55m</span><span class="s4">0</span><span class="s5">名称在当前层当前构件类型下不允许重名</span><span class="s6">471.3 FPS</span></footer>

  <div class="taskbar">
    <button class="start" aria-label="开始"><svg width="16" height="16"><path d="M0 2.300L6.800 1.300V7.500H0zM7.700 1.200L16 0v7.500H7.700zM0 8.400h6.800v6.300L0 13.700zM7.700 8.400H16V16l-8.300-1.200z" fill="#fff"/></svg></button>
    <label class="find"><svg width="22" height="22"><circle cx="11" cy="11" r="9" fill="none" stroke="#fff" stroke-width="3"/></svg><input type="text" placeholder="在这里输入你要搜索的内容" aria-label="搜索"><svg width="14" height="18"><rect x="4.500" y="1.500" width="5" height="9" fill="none" stroke="#aaa"/><path d="M1.500 8v4.500h11V8M7 12.500V16M4 16.500h6" fill="none" stroke="#aaa"/></svg></label>
    <button class="q" aria-label="任务视图"><svg width="22" height="16"><path d="M5.500 1.500h11v13h-11zM3.500 3.500h-2v9h2M18.500 3.500h2v9h-2" fill="none" stroke="#fff" stroke-width="1.200"/></svg></button>
    <button class="q" aria-label="风车"><svg width="24" height="24"><g fill="#e8e8e8"><path id="petal" d="M11.500 11.500Q3 11 2 7q0-5 5-5 4 0 5 3-2 3-.5 6.500z"/><use href="#petal" transform="rotate(90 12 12)"/><use href="#petal" transform="rotate(180 12 12)"/><use href="#petal" transform="rotate(270 12 12)"/></g></svg></button>
    <button class="q" aria-label="浏览器"><svg width="24" height="24"><path d="M5 13.500h15q0-8-7.500-8T5 13q0 7 7 7 5 0 7-4" fill="none" stroke="#e8e8e8" stroke-width="3.800"/><path d="M3 21Q1 16 10 8q8-6 11-5" fill="none" stroke="#e8e8e8" stroke-width="1.600"/></svg></button>
    <button class="q" aria-label="广联达"><svg width="24" height="24"><path d="M20 4q-4-2-8-1-9 2-8 10 2 8 9 7 7-1 6-7-3-4-7-2 1 3 3 2M16 6Q7 6 7 12q1 5 6 5" fill="none" stroke="#ddd" stroke-width="1.500"/></svg></button>
    <div class="pins">
      <button aria-label="Edge"><svg width="24" height="24"><path d="M2 11Q4 2 13 2q9 0 9 9v3H9q1 5 6 5 3 0 6-2v4q-3 2-7 2-9 0-9-9 0-5 4-7-5 1-7 4zM9 11h7q0-4-3-4-4 0-4 4z" fill="#0c78d8" fill-rule="evenodd"/></svg></button>
      <button aria-label="IE"><svg width="26" height="26"><path d="M7 14.500h14q0-8-7.500-8T6.500 14q0 7 7 7 5 0 6.500-3.500" fill="none" stroke="#3ca4ec" stroke-width="4"/><path d="M4 24Q-1 19 9 9 20 0 24 3q1 1 0 4" fill="none" stroke="#f0c830" stroke-width="2.200"/></svg></button>
      <button aria-label="资源管理器"><svg width="22" height="20"><path d="M0 1h8l2 2h12v16H0z" fill="#f8dc84"/><path d="M0 5h22" stroke="#e4b844"/><path d="M4 19v-8h14v8h-4v-4H8v4z" fill="#38a8e0"/></svg></button>
      <button class="run" aria-label="广联达云"><svg width="24" height="24"><path d="M23 2q-5 1-10 0Q2 3 1 13q1 10 11 10 10-1 9-11-3-5-8-3-4 2-1 6 3 1 4-2 1 6-5 6-5-1-4-7Q9 5 16 6q5 0 7-4z" fill="#18a0f0"/></svg></button>
      <button class="run act" aria-label="GGJ2013"><svg width="24" height="24"><use href="#app"/></svg></button>
      <button class="run" aria-label="便签"><svg width="24" height="24"><rect x="1" y="1" width="22" height="22" rx="2" fill="#f4a41c"/><path d="M4 6l13-2 1 15-13 1z" fill="#fff8e0"/><path d="M7 9l7-1M7 12l7-1M7 15l5-1" stroke="#666"/><path d="M22 2l-9 14-2 2 1-4 8-12z" fill="#a04810"/></svg></button>
      <button class="run" aria-label="360浏览器"><svg width="24" height="24"><circle cx="12" cy="13" r="10" fill="#4cc028"/><path d="M6 13.500h12q0-5.500-6-5.500t-6 5q0 5.500 6 5.500 4 0 5-2" fill="none" stroke="#fff" stroke-width="2.500"/><path d="M2 20Q8 4 22 2" fill="none" stroke="#2c8c14" stroke-width="1.600"/></svg></button>
      <button class="run" aria-label="帮助"><svg width="22" height="24"><path d="M2 9h9v13H2z" fill="#e4e4e4"/><path d="M4 12.500h5M4 15.500h5M4 18.500h5" stroke="#666"/><path d="M9 6V3h7v5h-3.500v5M12.500 15v3" fill="none" stroke="#f0e414" stroke-width="3"/></svg></button>
    </div>
    <div class="tray">
      <span>链接</span>
      <span class="cpu">50%<br>CPU使用</span>
      <svg width="12" height="8"><path d="M1 7l5-5 5 5" fill="none" stroke="#fff" stroke-width="1.300"/></svg>
      <svg width="16" height="14"><path d="M5.500 5.500h9v6h-9z" fill="none" stroke="#fff"/><path d="M7 7h6v3H7zM15 7h1v3h-1zM1 3h5v3q-2 3-4 0zM2 1h1v2H2zM4 1h1v2H4z" fill="#fff"/></svg>
      <svg width="14" height="14"><path d="M1 13Q2 2 13 1M4 13q1-8 9-9M7 13q1-5 6-6M10 13q0-2 3-3" fill="none" stroke="#ddd" stroke-width="1.200"/></svg>
      <svg width="17" height="14"><path d="M1 5h3l3-3v10L4 9H1zM9 5q2 2 0 4M11 3q4 4 0 8M13.500 1.500q4 5 0 11" fill="none" stroke="#fff"/></svg>
      <svg width="24" height="14"><path d="M.5.500h22v13H.5z" fill="none" stroke="#fff"/><path d="M3 3.500h18M3 6.500h18M6 10.500h11" stroke="#fff" stroke-dasharray="2 1"/></svg>
      <span>中</span>
      <svg width="16" height="16"><use href="#sogou"/></svg>
      <span class="clock">14:21<br>2018/4/27</span>
      <svg width="26" height="26"><path d="M2 1h16v13H9l-3 4v-4H2z" fill="#fff"/><path d="M5 4.500h10M5 7.500h10M5 10.500h7" stroke="#111"/><circle cx="17" cy="16.500" r="8" fill="#333" stroke="#888"/><path d="M15 14.500l2-1.500v7.500" stroke="#fff" stroke-width="1.400" fill="none"/></svg>
    </div>
  </div>
</div>
</body>
</html>
```
FILE: styles.css
```css
* { box-sizing: border-box; }
body { margin: 0; font: 12px/16px "Noto Sans", "Noto Sans CJK SC", sans-serif; color: #000; background: #f0f0f0; overflow: hidden; }
button, select, input { font: inherit; color: inherit; border: 0; background: none; padding: 0; margin: 0; border-radius: 0; white-space: nowrap; }
ul { margin: 0; padding: 0; list-style: none; }
svg { display: block; flex: none; }
.sprite { position: absolute; width: 0; height: 0; }
.i { width: 16px; height: 16px; }
.c { width: 9px; height: 9px; }
.flip { transform: scaleY(-1); }
.app { display: flex; flex-direction: column; height: 100vh; }

.t { display: flex; align-items: center; gap: 4px; }
.off, .mode { color: #7a7a7a; }
.arr { flex: none; width: 5px; height: 3px; background: currentColor; clip-path: polygon(0 0, 100% 0, 50% 100%); }
.arr.wide { margin: 0 2px 0 3px; }
.sep { flex: none; width: 1px; height: 17px; background: #b4b4b4; }
.more { font: bold 15px/12px "Liberation Sans", sans-serif; margin-left: auto; align-self: flex-start; }
.strip { display: flex; align-items: center; background: linear-gradient(#fcfcfc, #f0f0f0); border-radius: 3px; }

.title { position: relative; z-index: 3; flex: none; height: 23px; display: flex; align-items: center; padding-left: 2px; gap: 5px; background: #fff; }
.title h1 { margin: 0; font-size: 13px; font-weight: 400; color: #999; white-space: nowrap; flex: 1; min-width: 0; overflow: hidden; }
.winbtns { display: flex; gap: 33px; padding-right: 19px; }
.ime { position: absolute; left: 703px; top: 3px; height: 24px; display: flex; align-items: center; gap: 6px; padding: 0 3px 0 30px; background: #fff; border: 1px solid #a9c1da; color: #1c74c8; }
.ime svg { width: 16px; height: 16px; }
.ime b { font-size: 15px; width: 16px; }
.ime .ime-logo { position: absolute; left: -2px; top: -4px; width: 27px; height: 27px; }
.ball { position: absolute; left: 1042px; top: -26px; width: 45px; height: 45px; border-radius: 50%; background: #3cc860; border: 3px solid #d4d8d4; box-shadow: 0 0 5px #888; outline: 1px solid #999; outline-offset: -3px; color: #fff; font-weight: 700; text-align: center; padding-top: 21px; font-size: 11px; line-height: 16px; }

.menu { flex: none; height: 31px; display: flex; align-items: center; padding: 0 0 2px 7px; }
.menu-items { display: flex; gap: 11px; margin-right: 11px; }
.menu .owl { margin: 0 7px 0 5px; }
.menu .strip { height: 27px; }
.menu .more { align-self: center; }
.news { flex: 1; justify-content: center; max-width: 188px; }
.news a { color: #0c6c70; text-decoration: none; }
.account { flex: 1; margin-left: 2px; gap: 8px; padding: 0 4px; }

.bars { flex: none; height: 30px; display: flex; gap: 2px; padding-bottom: 2px; }
.bars .strip { gap: 7px; padding: 0 5px; }
.bars .more { margin-top: 2px; }
.bars .file { width: 151px; gap: 8px; padding: 0 4px; }
.file .t { gap: 6px; }
.bars .draw { flex: 0 1 548px; padding: 0 4px; }
.bars .view { flex: 1; gap: 6px; padding-left: 2px; }
.mode { display: flex; align-items: center; gap: 4px; width: 62px; height: 23px; padding: 0 3px 0 2px; border: 1px solid #666; margin-right: -2px; }
.mode select, .combo select { appearance: none; flex: 1; min-width: 0; outline: 0; }

.main { flex: 1; min-height: 0; display: flex; gap: 6px; }
.nav { flex: none; width: 165px; display: flex; flex-direction: column; font-family: "Liberation Serif", "Noto Sans CJK SC", serif; }
.nav-head { flex: none; display: flex; align-items: center; gap: 8px; height: 15px; padding-right: 4px; margin-bottom: 2px; border: 1px solid #808080; border-left: 0; font-size: 13px; line-height: 13px; }
.nav-head span { flex: 1; }
.cat { flex: none; height: 22px; border: 1px solid #a0a0a0; border-top-color: #fff; border-right-color: #888; background: #f0f0f0; }
.expand { flex: none; height: 27px; margin: 1px 1px 0 2px; padding: 6px 5px; background: linear-gradient(#fdfdfd, #f0f0f0); }
.tree { flex: 1; min-height: 0; display: flex; margin: 0 1px 1px 2px; border: 1px solid #828790; background: #fff; overflow: hidden; }
.nodes { flex: 1; min-width: 0; }
.nodes li { display: flex; align-items: center; gap: 4px; height: 16px; white-space: nowrap; }
.leaf { --h: repeating-linear-gradient(90deg, #808080 0 1px, transparent 1px 2px); --v: repeating-linear-gradient(#808080 0 1px, transparent 1px 2px); padding-left: 42px; background: var(--h) 31px 8px / 11px 1px no-repeat, var(--v) 31px 0 / 1px 100% no-repeat, var(--v) 12px 0 / 1px 100% no-repeat; }
.leaf.end { background-size: 11px 1px, 1px 8px, 1px 100%; }
.leaf.tail { background-size: 11px 1px, 1px 100%, 0 0; }
.leaf.tail.end { background-size: 11px 1px, 1px 8px, 0 0; }
.group { padding-left: 7px; }
.group .c { margin-right: 3px; }
.cur { display: flex; align-items: center; gap: 4px; background: #d9d9d9; }
.cur + .bk { width: 14px; height: 16px; margin-left: -2px; }
.scroll { flex: none; width: 15px; display: flex; flex-direction: column; align-items: center; background: #f0f0f0; padding: 5px 0; }
.thumb { width: 100%; background: #cdcdcd; margin: auto 0 5px; }
.nav-thumb { height: 58%; }
.nav .scroll { margin-right: 2px; }

.work { position: relative; flex: 1; min-width: 0; display: flex; flex-direction: column; }
.parts { flex: none; height: 28px; gap: 7px; padding: 0 4px; }
.parts .t .arr { margin: 0 1px 0 -1px; }
.parts .sep { margin: 0 -1px; }
.combo { display: flex; align-items: center; gap: 4px; }
.combo span { display: flex; align-items: center; height: 23px; background: #fff; padding: 0 4px 0 3px; }
.floor { margin: 0 -2px 0 -4px; }
.floor span { width: 63px; }
.panes { flex: 1; min-height: 0; display: flex; }
.list-pane { flex: none; width: 183px; display: flex; flex-direction: column; background: #fff; border-right: 2px solid #b4b4b4; }
.search { display: flex; align-items: center; height: 30px; padding: 4px 0 1px 1px; gap: 5px; }
.search input { width: 157px; height: 25px; border: 1px solid #707070; padding: 0 2px 4px; background: #fff; }
.search input::placeholder { color: #777; opacity: 1; }
.list { flex: 1; min-height: 0; display: flex; border: 1px solid #828790; font: 10px/16px "DejaVu Sans Mono", monospace; overflow: hidden; }
.list ul { flex: 1; padding-top: 1px; }
.list li { height: 16px; padding-left: 40px; background: repeating-linear-gradient(90deg, #808080 0 1px, transparent 1px 2px) 31px 8px / 12px 1px no-repeat, repeating-linear-gradient(#808080 0 1px, transparent 1px 2px) 31px 0 / 1px 100% no-repeat; }
.list li:last-child { background-size: 12px 1px, 1px 8px; }
.list span { display: flex; align-items: center; gap: 6px; width: 69px; height: 16px; padding-left: 4px; }
.list span svg { width: 12px; height: 12px; }
.list .sel { background: #316ac5; }
.list .scroll { width: 17px; }
.list-thumb { height: 59%; }
.prop-pane { flex: 1; display: flex; flex-direction: column; padding: 0 3px 0 4px; background: #fff; }
.prop-tab { align-self: flex-start; height: 21px; padding: 0 7px; border: 1px solid #d0d0d0; border-bottom: 0; background: #fff; }
.prop-body { flex: 1; min-height: 0; display: flex; justify-content: flex-end; padding: 4px 4px 6px 0; border: 1px solid #c4c4c4; border-top: 0; background: #fff; }
.prop-thumb { height: 69%; margin: 4px 0 auto; }

.dialog { position: absolute; left: 175px; right: 22px; top: 49px; bottom: 3px; display: flex; flex-direction: column; padding: 0 7px 7px; border: 1px solid #222; background: linear-gradient(#99b4d1, #b9d1ea 28px, #b9cfe8); box-shadow: inset 0 0 0 1px #e4eefa; }
.dialog h2 { flex: none; margin: 0; height: 29px; padding-top: 10px; font-size: 12px; font-weight: 400; line-height: 16px; }
.dlg-body { flex: 1; min-height: 0; display: flex; flex-direction: column; background: #f0f0f0; }
.tabs { flex: none; display: flex; align-items: flex-end; height: 21px; padding-left: 2px; }
.tabs button { height: 19px; padding: 0 7px; border: 1px solid #d9d9d9; border-bottom: 0; }
.tabs .on { height: 21px; padding: 0 13px 2px 6px; background: #fff; }
.page { flex: 1; min-height: 0; display: flex; flex-direction: column; margin-right: 2px; padding: 2px 2px 1px 4px; border: 1px solid #d9d9d9; border-left: 0; background: #fff; }
.tools { flex: none; background: #f0f0f0; margin-bottom: 1px; }
.row { width: 522px; height: 29px; gap: 4px; padding-left: 7px; }
.row.second { width: 319px; height: 27px; }
.row > * { flex: none; }
.row .sep { margin-right: -2px; }
.cell { padding-right: 4px; }
.box { height: 23px; padding: 0 4px; border: 1px solid #0078d7; background: #dcebf8; }
.box.slim, .box.pick { padding: 0 2px; }
.sp { margin-left: 3px; }
.bar span { width: 78px; }
.row .arr.wide { margin: 0 4px; }
.kind { margin-right: -3px; }
.canvas { flex: 1; min-height: 0; border: 2px solid #f00; background: #14171e; overflow: hidden; margin-left: 1px; }
.num { fill: #f0f0f0; font: 11px "Noto Sans", sans-serif; }
.dimmed { fill: #3c424c; }
.lae { fill: #0f0; font: 700 8px "DejaVu Serif", serif; }
.tag { fill: #c4c4c4; font: 300 19px "Noto Sans CJK SC", sans-serif; }
.green { fill: #0f0; }
.snap { flex: none; display: flex; gap: 2px; height: 28px; background: #f0f0f0; padding-bottom: 1px; }
.snap .strip { gap: 4px; padding: 0 5px 0 2px; }
.snap .two { gap: 7px; padding-left: 4px; }
.dlg-status { flex: none; display: flex; gap: 3px; height: 25px; padding-top: 3px; background: #f8f8f8; }
.dlg-status span { border: 1px solid #d9d9d9; background: linear-gradient(#fdfdfd, #f0f0f0); line-height: 20px; }
.xy { width: 97px; padding-left: 4px; }
.dlg-status .tip { flex: 1; display: flex; justify-content: space-between; align-items: flex-end; padding: 0 1px; }

.status { flex: none; display: flex; gap: 3px; height: 22px; padding: 2px 0 0; font-family: "Liberation Serif", "Noto Sans CJK SC", serif; }
.status span { border: 1px solid #d4d4d4; background: linear-gradient(#fdfdfd, #f0f0f0); line-height: 18px; padding-left: 1px; white-space: nowrap; }
.s1 { width: 147px; }
.s2 { width: 77px; }
.s3 { width: 98px; }
.s4 { width: 48px; }
.s5 { flex: 1; }
.status .s6 { width: 70px; font: 10px/18px "DejaVu Sans Mono", monospace; }

.taskbar { flex: none; display: flex; height: 40px; background: #020a0e; color: #fff; }
.taskbar button { display: flex; align-items: center; justify-content: center; }
.start { width: 48px; background: #000; }
.find { width: 344px; display: flex; align-items: center; gap: 5px; padding: 0 14px 0 9px; background: #333; }
.find input { flex: 1; min-width: 0; font-size: 14px; line-height: 20px; }
.find input::placeholder { color: #999; opacity: 1; }
.q { width: 50px; }
.pins { display: flex; margin-left: 5px; }
.pins button { width: 42px; border-bottom: 3px solid transparent; border-top: 3px solid transparent; }
.pins .run { border-image: linear-gradient(90deg, transparent 4px, #76b9ed 4px, #76b9ed 38px, transparent 38px) 0 0 3; }
.pins .act { background: #344046; }
.tray { flex: 1; display: flex; align-items: center; justify-content: flex-end; gap: 10px; padding-right: 17px; }
.cpu, .clock { text-align: center; line-height: 17px; }
.cpu { margin: 0 8px; }
.clock { margin: 0 8px; }
```
